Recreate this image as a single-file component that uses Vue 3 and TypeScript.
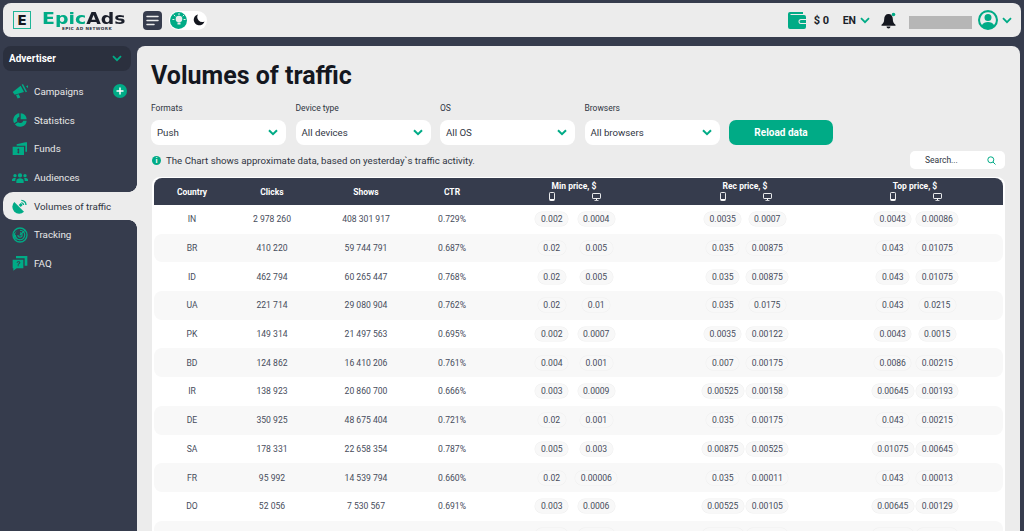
<script setup lang="ts">
interface Row { c: string; clicks: string; shows: string; ctr: string; p: string[] }
const raw = `IN|2 978 260|408 301 917|0.729%|0.002|0.0004|0.0035|0.0007|0.0043|0.00086
BR|410 220|59 744 791|0.687%|0.02|0.005|0.035|0.00875|0.043|0.01075
ID|462 794|60 265 447|0.768%|0.02|0.005|0.035|0.00875|0.043|0.01075
UA|221 714|29 080 904|0.762%|0.02|0.01|0.035|0.0175|0.043|0.0215
PK|149 314|21 497 563|0.695%|0.002|0.0007|0.0035|0.00122|0.0043|0.0015
BD|124 862|16 410 206|0.761%|0.004|0.001|0.007|0.00175|0.0086|0.00215
IR|138 923|20 860 700|0.666%|0.003|0.0009|0.00525|0.00158|0.00645|0.00193
DE|350 925|48 675 404|0.721%|0.02|0.001|0.035|0.00175|0.043|0.00215
SA|178 331|22 658 354|0.787%|0.005|0.003|0.00875|0.00525|0.01075|0.00645
FR|95 992|14 539 794|0.660%|0.02|0.00006|0.035|0.00011|0.043|0.00013
DO|52 056|7 530 567|0.691%|0.003|0.0006|0.00525|0.00105|0.00645|0.00129
TH|84 310|11 902 455|0.708%|0.003|0.0006|0.00525|0.00105|0.00645|0.00129`
const rows: Row[] = raw.split('\n').map((l) => {
  const a = l.split('|')
  return { c: a[0], clicks: a[1], shows: a[2], ctr: a[3], p: a.slice(4) }
})
const menu = [
  { label: 'Campaigns', d: ['M1 13.500 13 4l5 9.500-14 4Z', 'M14.500 2.500l2-1 6 11.500-2 1Z', 'M6 18l4-1.200 2.500 5-4 1.500Z', 'M21 5l3-1.500v4.500Z'] },
  { label: 'Statistics', d: ['M11 2A10 10 0 0 0 3.300 17L8 14a5 5 0 0 1 3-7Z', 'M13 2a10 10 0 0 1 9 9h-9Z', 'M22 13A10 10 0 0 1 4.300 18.500L9 15.500A5 5 0 0 0 16.900 13Z'] },
  { label: 'Funds', d: ['M1 8.500h17V21H1Zm8.500 2.500-2 2.800h1.300v2.400H7.500l2 2.800 2-2.800h-1.300v-2.400h1.300Z', 'M7 7V5l13-3h2.500v14H20V7Z'] },
  { label: 'Audiences', d: ['M12 6.500a3.200 3.200 0 1 1 0 6.400 3.200 3.200 0 0 1 0-6.400Z', 'M6.500 21v-3c0-2.500 2.500-4 5.500-4s5.500 1.500 5.500 4v3Z', 'M4.500 7.500a2.500 2.500 0 1 1 0 5 2.500 2.500 0 0 1 0-5Z', 'M19.500 7.500a2.500 2.500 0 1 1 0 5 2.500 2.500 0 0 1 0-5Z', 'M0 18v-2c0-1.500 2-2.500 4.500-2.500 1 0 1.300.2 1.300.2C5 15 5 16 5 18Z', 'M24 18v-2c0-1.500-2-2.500-4.500-2.500-1 0-1.300.2-1.300.2C19 15 19 16 19 18Z'] },
  { label: 'Volumes of traffic', active: true, d: ['M3.500 6 18 20.500A10 10 0 0 1 3.500 6Z', 'M10 10.500l3-3 3 3-3 3Z', 'M14 2.500a8.500 8.500 0 0 1 8 8h-2a6.500 6.500 0 0 0-6-6Z', 'M14 6a5 5 0 0 1 4.500 4.500h-2A3 3 0 0 0 14 8Z'] },
  { label: 'Tracking', d: ['M12 .500a11.500 11.500 0 1 1 0 23 11.500 11.500 0 0 1 0-23Zm0 2a9.500 9.500 0 1 0 0 19 9.500 9.500 0 0 0 0-19Z', 'M12 4a8 8 0 1 1-8 8h1.800A6.200 6.200 0 1 0 12 5.800Z', 'M5.500 7.500l2-1.500A8 8 0 0 0 12 20v-2a6 6 0 0 1-6.500-10.500Z', 'M12 8a4 4 0 1 1-4 4h1.700A2.300 2.300 0 1 0 12 9.700Z', 'M11 12 19 4l1.200 1.200-8 8Z'] },
  { label: 'FAQ', d: ['M1 7h16v13H7l-5 3.500V20H1Zm6 4.500h1.500c0-1.500 2.500-1.500 2.500 0 0 1-2.500 1.200-2.500 3H10c0-1.200 2.500-1.500 2.500-3 0-3-5.500-3-5.500 0Zm1.500 3.800v1.500H10v-1.500Z', 'M6 5V1.500h17V16h-4V5Z'] },
]
const filters = [
  { label: 'Formats', value: 'Push' },
  { label: 'Device type', value: 'All devices' },
  { label: 'OS', value: 'All OS' },
  { label: 'Browsers', value: 'All browsers' },
]
const priceGroups = ['Min price, $', 'Rec price, $', 'Top price, $']
</script>

<template>
  <div class="app">
    <header class="topbar">
      <div class="logo-box">E</div>
      <div class="logo-text">
        <div class="logo-name"><span class="green">Epic</span>Ads</div>
        <div class="logo-sub">EPIC AD NETWORK</div>
      </div>
      <button class="burger" aria-label="Menu">
        <svg width="13" height="11" viewBox="0 0 13 11"><path d="M1 1.500h11M1 5.500h11M1 9.500h7" stroke="#ececec" stroke-width="1.500" stroke-linecap="round" /></svg>
      </button>
      <div class="theme">
        <span class="sun">
          <svg width="14" height="14" viewBox="0 0 14 14"><circle cx="7" cy="6" r="3.300" fill="#ececec" /><path d="M5.500 9.500h3v2h-3Z" fill="#ececec" /><path d="M7 .500v1.200M2 2l1 1M12 2l-1 1M.800 6.500h1.200M12 6.500h1.200" stroke="#ececec" stroke-width="1" stroke-linecap="round" /></svg>
        </span>
        <svg width="12" height="12" viewBox="0 0 12 12"><path d="M5 .5a5.500 5.500 0 1 0 6.500 7A5 5 0 0 1 5 .5Z" fill="#14171f" /></svg>
      </div>
      <div class="spacer"></div>
      <svg class="wallet" width="18" height="17" viewBox="0 0 18 17"><path d="M2 0h13v2H2.500v1H16a2 2 0 0 1 2 2v2h-5a2.500 2.500 0 0 0 0 5h5v3a2 2 0 0 1-2 2H2a2 2 0 0 1-2-2V2a2 2 0 0 1 2-2Zm11 8h5v3h-5a1.500 1.500 0 0 1 0-3Z" fill="#00ab86" /></svg>
      <span class="balance">$ 0</span>
      <span class="lang">EN</span>
      <svg class="chev lang-chev" width="10" height="7" viewBox="0 0 10 7"><path d="M1 1.200 5 5.200l4-4" fill="none" stroke="#00ab86" stroke-width="1.800" /></svg>
      <svg class="bell" width="16" height="17" viewBox="0 0 16 17"><path d="M7.500 2c2.700 0 4.300 2 4.300 5 0 3 1 4.500 2.700 5.700v1H.5v-1C2.200 11.500 3.200 10 3.200 7c0-3 1.600-5 4.300-5Z" fill="#14171f" /><path d="M5.500 14.500h4A2 2 0 0 1 5.500 14.500Z" fill="#14171f" /><circle cx="12.500" cy="2.500" r="1.800" fill="#00ab86" /></svg>
      <div class="blurred"></div>
      <svg class="avatar" width="20" height="20" viewBox="0 0 20 20"><path d="M10 0a10 10 0 1 1 0 20 10 10 0 0 1 0-20Zm0 2.200a7.800 7.800 0 0 0-6 12.800c1-2 3.300-3 6-3s5 1 6 3a7.800 7.800 0 0 0-6-12.800Zm0 1.800a3.500 3.500 0 1 1 0 7 3.500 3.500 0 0 1 0-7Z" fill="#00ab86" fill-rule="evenodd" /></svg>
      <svg class="chev" width="10" height="7" viewBox="0 0 10 7"><path d="M1 1.200 5 5.200l4-4" fill="none" stroke="#00ab86" stroke-width="1.800" /></svg>
    </header>

    <div class="body">
      <aside class="sidebar">
        <div class="role">
          <span>Advertiser</span>
          <svg width="10" height="7" viewBox="0 0 10 7"><path d="M1 1.200 5 5.200l4-4" fill="none" stroke="#00ab86" stroke-width="1.800" /></svg>
        </div>
        <nav class="menu">
          <a v-for="m in menu" :key="m.label" class="item" :class="{ active: m.active }">
            <svg class="mi" width="16" height="16" viewBox="0 0 24 24"><path v-for="(d, i) in m.d" :key="i" :d="d" fill="#00ab86" fill-rule="evenodd" /></svg>
            <span class="il">{{ m.label }}</span>
            <span v-if="m.label === 'Campaigns'" class="plus">
              <svg width="8" height="8" viewBox="0 0 8 8"><path d="M4 .5v7M.5 4h7" stroke="#fff" stroke-width="1.500" /></svg>
            </span>
          </a>
        </nav>
      </aside>

      <main class="main">
        <h1 class="title">Volumes of traffic</h1>
        <div class="filters">
          <div v-for="f in filters" :key="f.label" class="field">
            <label class="flabel">{{ f.label }}</label>
            <div class="select">
              <span>{{ f.value }}</span>
              <svg width="10" height="7" viewBox="0 0 10 7"><path d="M1 1.200 5 5.200l4-4" fill="none" stroke="#00ab86" stroke-width="2" /></svg>
            </div>
          </div>
          <button class="reload">Reload data</button>
        </div>
        <div class="noticebar">
          <div class="notice">
            <span class="info">i</span>
            <span>The Chart shows approximate data, based on yesterday`s traffic activity.</span>
          </div>
          <div class="search">
            <span>Search...</span>
            <svg width="9" height="9" viewBox="0 0 9 9"><circle cx="3.800" cy="3.800" r="3" fill="none" stroke="#00ab86" stroke-width="1" /><path d="M6 6l2.500 2.500" stroke="#00ab86" stroke-width="1" /></svg>
          </div>
        </div>
        <div class="table">
          <div class="thead grid">
            <div>Country</div><div>Clicks</div><div>Shows</div><div>CTR</div>
            <div v-for="g in priceGroups" :key="g" class="pg">
              <div class="pgt">{{ g }}</div>
              <div class="pair">
                <svg width="6" height="9" viewBox="0 0 6 9"><rect x=".5" y=".5" width="5" height="8" rx=".8" fill="none" stroke="#fff" stroke-width=".9" /><path d="M1 7h4v1.500H1Z" fill="#fff" /></svg>
                <svg width="9" height="8" viewBox="0 0 9 8"><rect x=".5" y=".5" width="8" height="5" rx=".6" fill="none" stroke="#fff" stroke-width=".9" /><path d="M2.500 7h4v.8h-4ZM4 5.500h1V7H4Z" fill="#fff" /></svg>
              </div>
            </div>
          </div>
          <div v-for="(r, i) in rows" :key="r.c" class="row grid" :class="{ odd: i % 2 === 1 }">
            <div>{{ r.c }}</div><div>{{ r.clicks }}</div><div>{{ r.shows }}</div><div>{{ r.ctr }}</div>
            <div v-for="g in 3" :key="g" class="pair">
              <span class="pill">{{ r.p[(g - 1) * 2] }}</span>
              <span class="pill">{{ r.p[(g - 1) * 2 + 1] }}</span>
            </div>
          </div>
        </div>
      </main>
    </div>
  </div>
</template>

<style>
html, body { margin: 0; height: 100%; overflow: hidden; background: #363c4d; }
</style>

<style scoped>
.app {
  height: 531px;
  overflow: hidden;
  background: #363c4d;
  font-family: Roboto, "Noto Sans", sans-serif;
  color: #2f3542;
  display: flex;
  flex-direction: column;
}
.topbar {
  height: 34px;
  margin: 3px 3px 9px;
  padding: 0 9px 0 10px;
  background: #ececec;
  border-radius: 8px;
  display: flex;
  align-items: center;
  flex: none;
}
.logo-box {
  width: 16px;
  height: 16px;
  border: 1.500px solid #1fb597;
  display: flex;
  align-items: center;
  justify-content: center;
  font: 800 14px "DejaVu Sans", sans-serif;
  color: #14171f;
  line-height: 1;
}
.logo-text { margin-left: 11px; width: 90px; padding-top: 2px; }
.logo-name {
  font: 700 15.500px/14px "DejaVu Sans", sans-serif;
  color: #1b1f2b;
  white-space: nowrap;
  transform: scaleX(1.22);
  transform-origin: left center;
}
.green { color: #00ab86; }
.logo-sub {
  font: 700 4.200px/5px "DejaVu Sans", sans-serif;
  letter-spacing: .4px;
  margin-left: 20px;
  color: #2f3542;
  white-space: nowrap;
}
.burger {
  width: 19px;
  height: 19px;
  margin-left: 11px;
  padding: 0;
  border: 0;
  border-radius: 4px;
  background: #363c4d;
  display: flex;
  align-items: center;
  justify-content: center;
}
.theme {
  width: 38px;
  height: 19px;
  margin-left: 7px;
  background: #fff;
  border-radius: 10px;
  display: flex;
  align-items: center;
  gap: 6px;
  padding-left: 1px;
  box-sizing: border-box;
}
.sun {
  width: 17px;
  height: 17px;
  border-radius: 50%;
  background: #00ab86;
  display: flex;
  align-items: center;
  justify-content: center;
}
.spacer { flex: 1; }
.balance { margin-left: 8px; font-size: 11px; font-weight: 700; width: 16px; white-space: nowrap; color: #1b1f2b; }
.lang { margin-left: 13px; font-size: 10.500px; font-weight: 700; color: #1b1f2b; }
.lang-chev { margin-left: 3px; }
.bell { margin-left: 11px; }
.blurred {
  width: 63px;
  height: 13px;
  margin: 5px 0 0 12px;
  background: #b6b6b6;
  filter: blur(.6px);
}
.avatar { margin-left: 6px; }
.chev { margin-left: 4px; }

.body { flex: 1; display: flex; min-height: 0; }
.sidebar { width: 137px; flex: none; }
.role {
  width: 128px;
  height: 25px;
  margin-left: 3px;
  padding: 0 9px 0 6px;
  box-sizing: border-box;
  background: #2b303e;
  border-radius: 8px;
  display: flex;
  align-items: center;
  justify-content: space-between;
  color: #fff;
  font-size: 10px;
  font-weight: 700;
}
.menu { margin-top: 6px; display: flex; flex-direction: column; }
.item {
  height: 28.700px;
  margin-left: 3px;
  padding: 0 10px 0 9px;
  display: flex;
  align-items: center;
  color: #e8e8e8;
  font-size: 9.800px;
  position: relative;
}
.mi { flex: none; }
.il { margin-left: 6px; white-space: nowrap; }
.plus {
  width: 14px;
  height: 14px;
  margin-left: auto;
  border-radius: 50%;
  background: #00ab86;
  display: flex;
  align-items: center;
  justify-content: center;
}
.item.active {
  background: #ececec;
  color: #2f3542;
  border-radius: 10px 0 0 10px;
}
.item.active::before, .item.active::after {
  content: "";
  position: absolute;
  right: 0;
  width: 8px;
  height: 8px;
  background: radial-gradient(circle at 0 0, transparent 7.500px, #ececec 8px);
}
.item.active::before { top: -8px; }
.item.active::after { bottom: -8px; background: radial-gradient(circle at 0 100%, transparent 7.500px, #ececec 8px); }

.main {
  flex: 1;
  margin-right: 4px;
  padding: 15px 15px 0 14px;
  background: #ececec;
  border-radius: 8px 8px 0 0;
  min-width: 0;
}
.title {
  margin: 0;
  font-size: 25px;
  line-height: 29px;
  font-weight: 700;
  color: #14171f;
}
.filters { display: flex; align-items: flex-end; gap: 9.500px; margin-top: 13px; }
.field { width: 135px; }
.flabel { display: block; font-size: 8.500px; line-height: 10px; margin-bottom: 7px; color: #2f3542; }
.select {
  height: 25px;
  padding: 0 8px 0 6px;
  box-sizing: border-box;
  background: #fff;
  border-radius: 8px;
  display: flex;
  align-items: center;
  justify-content: space-between;
  font-size: 9.700px;
}
.reload {
  width: 104px;
  height: 25px;
  border: 0;
  border-radius: 7px;
  background: #00ab86;
  color: #fff;
  font: 700 10px Roboto, sans-serif;
}
.noticebar { display: flex; justify-content: space-between; align-items: center; height: 18px; margin-top: 6px; margin-left: 1px; }
.notice { display: flex; align-items: center; gap: 5px; font-size: 9.700px; margin-top: 1px; }
.info {
  width: 9px;
  height: 9px;
  border-radius: 50%;
  background: #00ab86;
  color: #fff;
  font-size: 7.500px;
  font-weight: 700;
  line-height: 9px;
  text-align: center;
}
.search {
  width: 95px;
  height: 18px;
  padding: 0 9px 0 15px;
  box-sizing: border-box;
  background: #fff;
  border-radius: 5px;
  display: flex;
  align-items: center;
  justify-content: space-between;
  font-size: 8.500px;
}
.table {
  margin-top: 8px;
  margin-left: 1px;
  padding: 1px 2px 0;
  background: #fff;
  border-radius: 8px 8px 0 0;
  height: 400px;
  color: #474d5c;
}
.grid {
  display: grid;
  grid-template-columns: 76px 84px 104px 68px 176px 166px 174px;
  align-items: center;
  text-align: center;
  font-size: 8.600px;
}
.thead {
  height: 27px;
  background: #363c4d;
  border-radius: 8px 8px 0 0;
  color: #fff;
  font-weight: 700;
  font-size: 8.500px;
}
.pgt { line-height: 10px; }
.pg .pair { height: 11px; }
.pair {
  display: grid;
  grid-template-columns: 44.500px 44.500px;
  justify-content: center;
  justify-items: center;
  align-items: center;
}
.row { height: 28.700px; border-radius: 8px; }
.row.odd { background: #f8f8f8; }
.pill {
  padding: 0 5.500px;
  height: 14px;
  line-height: 14px;
  border-radius: 7px;
  background: #f8f8f8;
  box-shadow: 0 0 0 .5px #efefef;
  white-space: nowrap;
}
</style>
